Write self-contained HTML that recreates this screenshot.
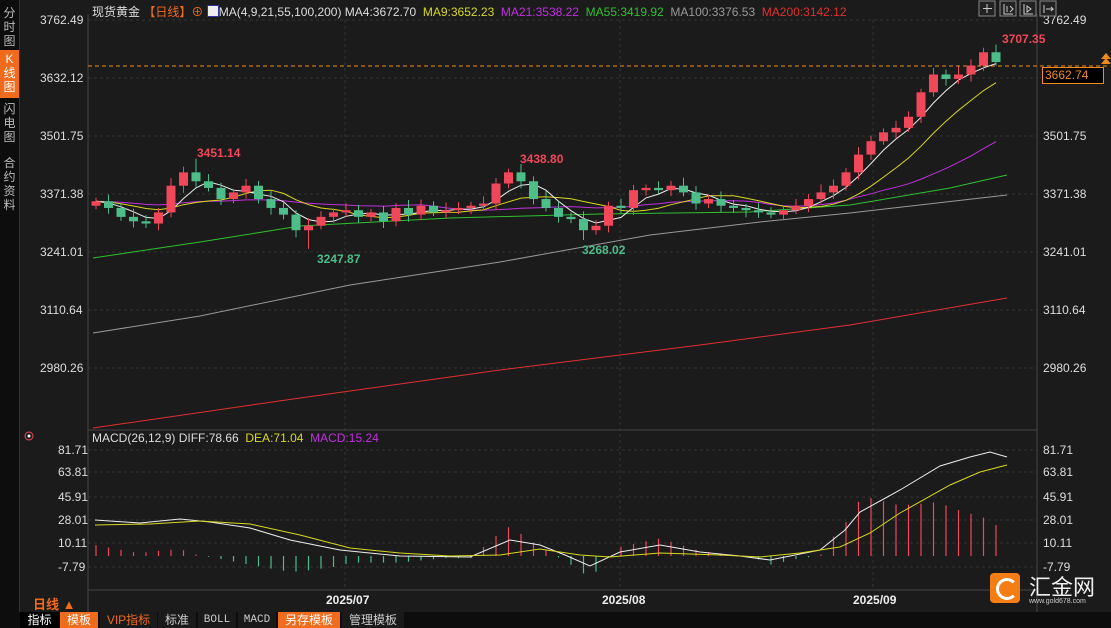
<!DOCTYPE html><html><head><meta charset="utf-8"><style>
body{margin:0;width:1111px;height:628px;overflow:hidden;background:#1b1b1b;font-family:"Liberation Sans","Noto Sans CJK SC",sans-serif;position:relative}
.t{position:absolute;white-space:nowrap;font-size:12px}
#side{position:absolute;left:0;top:0;width:19px;height:612px;background:#0d0d0d;border-right:1px solid #333}
.sb{position:absolute;left:0;width:19px;color:#bbb;font-size:12px;line-height:14px;text-align:center}
#tabs{position:absolute;left:0;top:612px;width:1111px;height:16px;background:#0d0d0d;font-size:12px}
.tb{position:absolute;top:0;height:16px;line-height:16px;text-align:center;color:#ccc;background:#1a1a1a}
</style></head><body>
<svg id="s" width="1111" height="628" style="position:absolute;left:0;top:0"></svg>
<div id="side">
<div class="sb" style="top:6px">分<br>时<br>图</div>
<div class="sb" style="top:50px;height:46px;background:#f26b1d;color:#fff;padding-top:2px">K<br>线<br>图</div>
<div class="sb" style="top:102px">闪<br>电<br>图</div>
<div class="sb" style="top:156px">合<br>约<br>资<br>料</div>
</div>
<div class="t" style="left:92px;top:3px;color:#ddd">现货黄金 <span style="color:#f26b1d">【日线】</span><span style="color:#f26b1d">⊕</span> <span style="display:inline-block;width:10px;height:10px;background:#eee;border:1px solid #339;vertical-align:-1px"></span>MA(4,9,21,55,100,200) MA4:3672.70 &nbsp;<span style="color:#d8d820">MA9:3652.23</span> &nbsp;<span style="color:#c030e0">MA21:3538.22</span> &nbsp;<span style="color:#30c030">MA55:3419.92</span> &nbsp;<span style="color:#999">MA100:3376.53</span> &nbsp;<span style="color:#e03030">MA200:3142.12</span></div>
<div class="t" style="left:92px;top:431px;color:#ddd">MACD(26,12,9) DIFF:78.66 &nbsp;<span style="color:#d8d820">DEA:71.04</span> &nbsp;<span style="color:#c030e0">MACD:15.24</span></div>
<div class="t" style="left:33px;top:594px;color:#f26b1d;font-weight:bold;font-size:13px">日线 ▲</div>
<div class="t" style="left:326px;top:593px;color:#eee;font-weight:bold">2025/07</div>
<div class="t" style="left:602px;top:593px;color:#eee;font-weight:bold">2025/08</div>
<div class="t" style="left:853px;top:593px;color:#eee;font-weight:bold">2025/09</div>
<div class="t" style="left:1042px;top:67px;width:58px;height:15px;border:1px solid #f28b1d;color:#f28b1d;background:#000;line-height:15px;padding-left:2px">3662.74</div>
<div style="position:absolute;left:990px;top:573px;width:30px;height:30px;background:#f47d14;border-radius:4px"></div>
<div style="position:absolute;left:996px;top:578px;width:16px;height:16px;border:3px solid #fff;border-radius:50%;border-right-color:transparent"></div>
<div class="t" style="left:1029px;top:570px;color:#eee;font-size:22px">汇金网</div>
<div class="t" style="left:1029px;top:598px;color:#ccc;font-size:7px">www.gold678.com</div>
<div id="tabs">
<div class="tb" style="left:20px;width:39px;color:#fff;background:#000">指标</div>
<div class="tb" style="left:60px;width:38px;background:#f26b1d;color:#fff">模板</div>
<div class="tb" style="left:100px;width:57px;color:#f26b1d">VIP指标</div>
<div class="tb" style="left:158px;width:38px">标准</div>
<div class="tb" style="left:198px;width:38px;font-family:'Liberation Mono',monospace;font-size:11px">BOLL</div>
<div class="tb" style="left:238px;width:38px;font-family:'Liberation Mono',monospace;font-size:11px">MACD</div>
<div class="tb" style="left:278px;width:62px;background:#f26b1d;color:#fff">另存模板</div>
<div class="tb" style="left:342px;width:62px">管理模板</div>
</div>
<script>
var S=document.getElementById('s'),h='';
function Y(p){return 20+(3762.49-p)/2.2478}
var lv=[3762.49,3632.12,3501.75,3371.38,3241.01,3110.64,2980.26];
lv.forEach(function(p,i){var y=Y(p);h+='<line x1="88" x2="1037" y1="'+y+'" y2="'+y+'" stroke="#333" stroke-dasharray="3,3"/>';
h+='<text x="40" y="'+(y+4)+'" fill="#ddd" font-size="12">'+p.toFixed(2)+'</text><text x="1043" y="'+(y+4)+'" fill="#ddd" font-size="12">'+p.toFixed(2)+'</text>';});
var mv=[[81.71,450],[63.81,472],[45.91,497],[28.01,520],[10.11,543],[-7.79,567]];
mv.forEach(function(m){h+='<line x1="88" x2="1037" y1="'+m[1]+'" y2="'+m[1]+'" stroke="#333" stroke-dasharray="3,3"/><text x="58" y="'+(m[1]+4)+'" fill="#ddd" font-size="12">'+m[0].toFixed(2)+'</text><text x="1043" y="'+(m[1]+4)+'" fill="#ddd" font-size="12">'+m[0].toFixed(2)+'</text>';});
[345,620,873].forEach(function(x){h+='<line x1="'+x+'" x2="'+x+'" y1="20" y2="590" stroke="#333" stroke-dasharray="3,3"/>'});
h+='<line x1="88" x2="1037" y1="430" y2="430" stroke="#444"/><line x1="88" x2="1037" y1="590" y2="590" stroke="#444"/><line x1="88" x2="88" y1="14" y2="612" stroke="#444"/><line x1="1037" x2="1037" y1="14" y2="612" stroke="#444"/>';
h+='<line x1="88" x2="1110" y1="66" y2="66" stroke="#f28b1d" stroke-dasharray="4,3"/>';
var c=[3355,3340,3320,3310,3305,3330,3390,3420,3400,3385,3360,3375,3390,3360,3340,3325,3290,3300,3320,3330,3335,3320,3330,3310,3340,3325,3345,3330,3335,3340,3345,3350,3395,3420,3400,3360,3340,3320,3315,3290,3300,3345,3340,3380,3385,3380,3390,3375,3350,3360,3345,3340,3335,3330,3325,3335,3345,3360,3375,3390,3420,3460,3490,3510,3520,3545,3600,3640,3630,3640,3660,3690,3668];
var n=c.length;function X(i){return 96+i*12.5}
function ma(k){var a=[];for(var i=0;i<n;i++){var s=0;for(var j=i-k+1;j<=i;j++)s+=c[Math.max(0,j)];a.push(s/k)}return a}
function pl(pts,col){return '<polyline fill="none" stroke="'+col+'" stroke-width="1" points="'+pts.join(' ')+'"/>'}
function mal(a,col){return pl(a.map(function(v,i){return X(i)+','+Y(v).toFixed(1)}),col)}
h+=pl(['93,428','300,398','500,370','700,345','850,325','1007,298'],'#e03030');
h+=pl(['93,333','200,316','350,285','500,262','650,235','760,222','850,213','1007,195'],'#999');
h+=pl(['93,258','200,242','300,226','450,218','600,214','750,212','850,205','950,188','1007,175'],'#30c030');
h+=mal(ma(21),'#c030e0');h+=mal(ma(9),'#d8d820');h+=mal(ma(4),'#eee');
for(var i=0;i<n;i++){var o=i?c[i-1]:3345,cl=c[i],up=cl>=o,col=up?'#f0475a':'#4dbd8a';
var hi=Math.max(o,cl)+8+(i*7%11),lo=Math.min(o,cl)-8-(i*5%9);
if(i==8)hi=3451;if(i==17)lo=3247.9;if(i==34)hi=3438.8;if(i==39)lo=3268;if(i==72)hi=3707;
var x=X(i),y1=Y(Math.max(o,cl)),y2=Y(Math.min(o,cl));if(y2-y1<1)y2=y1+1;
h+='<line x1="'+x+'" x2="'+x+'" y1="'+Y(hi)+'" y2="'+Y(lo)+'" stroke="'+col+'"/><rect x="'+(x-4.5)+'" y="'+y1+'" width="9" height="'+(y2-y1)+'" fill="'+col+'"/>';}
h+='<text x="197" y="157" fill="#f0475a" font-size="12" font-weight="bold">3451.14</text><text x="317" y="263" fill="#4dbd8a" font-size="12" font-weight="bold">3247.87</text><text x="520" y="163" fill="#f0475a" font-size="12" font-weight="bold">3438.80</text><text x="582" y="254" fill="#4dbd8a" font-size="12" font-weight="bold">3268.02</text><text x="1002" y="43" fill="#f0475a" font-size="12" font-weight="bold">3707.35</text>';
h+='<path d="M1101 64 l5 -6 l5 6 z M1101 59 l5 -6 l5 6z" fill="#f28b1d"/>';
[979,1000,1020,1040].forEach(function(x,k){h+='<rect x="'+x+'" y="1" width="16" height="15" fill="#222" stroke="#888"/>'});
h+='<path d="M987 4v9M983 8.5h9M1004 4v10h9M1007 6v6M1010 6l3 3-3 3M1024 4v10h9M1027 6l4 3-4 3zM1044 5v8M1046 9h7l-2-2M1053 9l-2 2" stroke="#ccc" fill="none"/>';
h+='<circle cx="29" cy="436" r="4" fill="none" stroke="#f0475a"/><circle cx="29" cy="436" r="1.5" fill="#fff"/>';
var DIF=[[95,520],[140,523],[180,519],[210,522],[250,528],[290,540],[340,550],[400,556],[470,557],[510,540],[540,545],[565,555],[590,566],[620,552],[660,545],[700,552],[740,556],[770,560],[820,550],[845,530],[860,512],[900,490],[940,466],[970,457],[990,452],[1007,457]];
var DEA=[[95,525],[150,524],[200,521],[250,524],[300,535],[350,548],[400,553],[450,556],[500,555],[540,549],[580,555],[610,557],[660,553],[720,555],[760,557],[800,553],[840,547],[870,533],[900,513],[950,485],[980,472],[1007,465]];
function at(L,x){for(var k=1;k<L.length;k++){if(x<=L[k][0]){var a=L[k-1],b=L[k];return a[1]+(b[1]-a[1])*(x-a[0])/(b[0]-a[0])}}return L[L.length-1][1]}
for(var i=0;i<n;i++){var x=X(i),d=(at(DEA,x)-at(DIF,x))*2.2,z=556;
h+='<line x1="'+x+'" x2="'+x+'" y1="'+z+'" y2="'+(z-d)+'" stroke="'+(d>=0?'#f0475a':'#4dbd8a')+'" stroke-width="1.2"/>';}
h+=pl(DIF.map(function(p){return p.join(',')}),'#eee');h+=pl(DEA.map(function(p){return p.join(',')}),'#d8d820');
S.innerHTML=h;
</script>
</body></html>
